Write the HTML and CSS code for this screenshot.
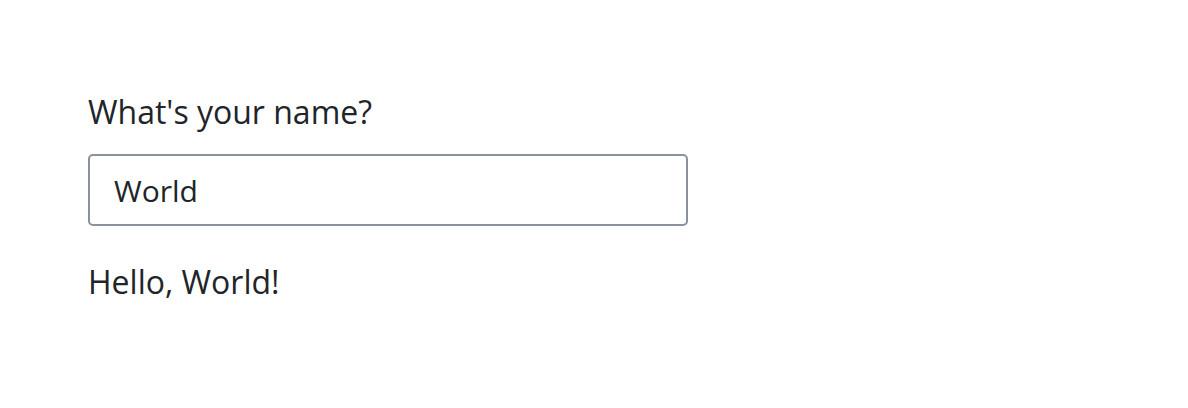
FILE: index.html
```html
<!DOCTYPE html>
<html>
<head>
<meta charset="utf-8">
<link rel="stylesheet" href="styles.css">
</head>
<body>
<main class="page">
  <label class="label" for="name">What's your name?</label>
  <input class="field" id="name" type="text" value="World">
  <p class="greeting">Hello, World!</p>
</main>
</body>
</html>
```
FILE: styles.css
```css
html, body {
  margin: 0;
  padding: 0;
  background: #ffffff;
}
.page {
  display: flex;
  flex-direction: column;
  align-items: flex-start;
  padding: 90px 0 0 88px;
  font-family: "Open Sans", "DejaVu Sans", sans-serif;
  color: #212529;
}
.label {
  font-size: 32px;
  line-height: 44px;
  margin-bottom: 20px;
}
.field {
  box-sizing: border-box;
  width: 600px;
  height: 72px;
  border: 2px solid #8a939b;
  border-radius: 5px;
  padding: 0 24px;
  font-family: inherit;
  font-size: 30px;
  color: #212529;
  background: #fff;
  outline: none;
  margin: 0;
}
.greeting {
  margin: 34px 0 0 0;
  font-size: 32px;
  line-height: 44px;
}
```
